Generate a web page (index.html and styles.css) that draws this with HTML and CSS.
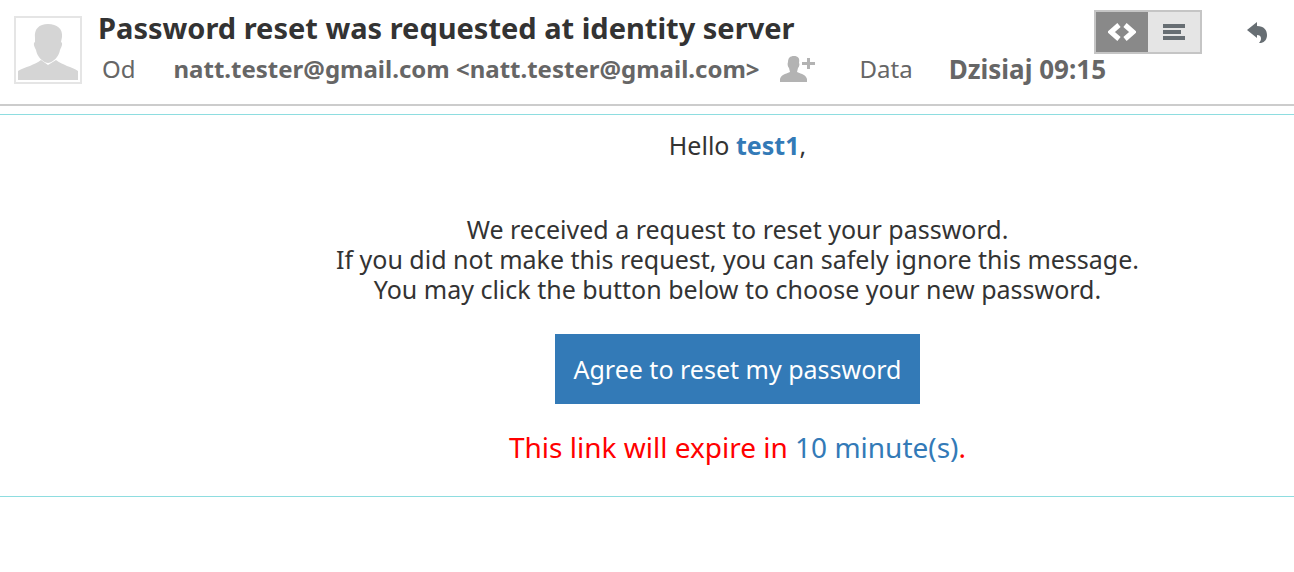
FILE: index.html
```html
<!DOCTYPE html>
<html lang="pl">

<head>
    <meta charset="UTF-8">
    <meta name="viewport" content="width=device-width, initial-scale=1.0">
    <title>Password reset was requested at identity server</title>
    <link rel="stylesheet" href="styles.css">
</head>

<body>

    <header class="message-header">
        <div class="avatar">
            <svg viewBox="0 0 64 64" aria-hidden="true">
                <path d="M19 20c-1-9 4-14 13-14s15 5 14 13l-1 5c2 1 1 4-1 8-1 6-6 12-12 13-6-1-11-7-12-13-2-4-3-7-1-8z" />
                <path d="M2 62v-9c7-4 17-6 23-11l7 5 8-5c6 5 16 7 22 11v9z" />
            </svg>
        </div>

        <div class="message-info">
            <h1>Password reset was requested at identity server</h1>
            <div class="details">
                <span class="label">Od</span>
                <strong class="sender">natt.tester@gmail.com &lt;natt.tester@gmail.com&gt;</strong>
                <button type="button" class="icon-button add-contact" aria-label="Dodaj kontakt">
                    <svg width="36" height="26" viewBox="0 0 36 26">
                        <path d="M8 6c0-4 2-6 6-6s6 2 5 7c1 1 0 4-1 5l-1 4c5 2 9 3 10 7v3H0v-3c1-4 5-5 10-7l-1-4c-1-1-2-4-1-6z" />
                        <path d="M27 2h3v4h5v3h-5v4h-3V9h-5V6h5z" />
                    </svg>
                </button>
                <span class="label">Data</span>
                <strong class="date">Dzisiaj 09:15</strong>
            </div>
        </div>

        <div class="actions">
            <div class="view-switch">
                <button type="button" class="active" aria-label="HTML">
                    <svg width="28" height="20" viewBox="0 0 28 20">
                        <path d="M11 3L3 10l8 7M17 3l8 7-8 7" fill="none" stroke="#fff" stroke-width="5" />
                    </svg>
                </button>
                <button type="button" aria-label="Tekst">
                    <svg width="22" height="16" viewBox="0 0 22 16">
                        <path d="M0 0h22v4H0zM0 6h18v4H0zM0 12h22v4H0z" fill="#676e73" />
                    </svg>
                </button>
            </div>
            <button type="button" class="icon-button reply" aria-label="Odpowiedz">
                <svg width="20" height="21" viewBox="0 0 20 21">
                    <path d="M0 8l10-8v4c7 0 10 4 10 9 0 4-2 7-6 8h-2c3-3 3-8-2-8v3z" fill="#676e73" />
                </svg>
            </button>
        </div>
    </header>

    <main class="message-body">
        <p class="greeting">Hello <strong>test1</strong>,</p>
        <p class="text">
            We received a request to reset your password.<br>
            If you did not make this request, you can safely ignore this message.<br>
            You may click the button below to choose your new password.
        </p>
        <a class="reset-link" href="#">Agree to reset my password</a>
        <p class="expire">This link will expire in <span>10 minute(s)</span>.</p>
    </main>

</body>

</html>
```
FILE: styles.css
```css
body {
    font-family: 'Noto Sans', 'Open Sans', sans-serif;
    font-size: 25px;
    line-height: 30px;
    background-color: #fff;
    color: #333;
    margin: 0;
}

p,
h1 {
    margin: 0;
}

button {
    border: none;
    padding: 0;
    cursor: pointer;
}

button svg {
    display: block;
}

.message-header {
    display: flex;
    align-items: flex-start;
    gap: 16px;
    min-height: 94px;
    padding: 10px 27px 0 14px;
    border-bottom: 2px solid #ccc;
}

.avatar {
    box-sizing: border-box;
    width: 68px;
    height: 68px;
    flex-shrink: 0;
    margin-top: 6px;
    border: 2px solid #e5e5e5;
}

.avatar svg {
    display: block;
    fill: #d5d5d5;
}

.message-info {
    flex: 1;
    min-width: 0;
    white-space: nowrap;
}

h1 {
    font-size: 29px;
    line-height: 36px;
}

.details {
    display: flex;
    align-items: center;
    padding: 7px 0 0 4px;
    font-size: 24px;
    line-height: 32px;
    color: #666;
}

.sender {
    margin-left: 38px;
}

.add-contact {
    margin: 0 44px 0 20px;
}

.date {
    margin-left: 36px;
    font-size: 26px;
}

.icon-button {
    background: none;
}

.add-contact svg {
    fill: #b3b3b3;
}

.actions {
    display: flex;
    flex-shrink: 0;
    align-items: center;
    gap: 45px;
}

.view-switch {
    display: flex;
    border: 2px solid #c5c5c5;
}

.view-switch button {
    display: flex;
    align-items: center;
    justify-content: center;
    width: 52px;
    height: 40px;
    background-color: #e5e5e5;
}

.view-switch .active {
    background-color: #898989;
}

/* message content */
.message-body {
    margin-top: 8px;
    padding: 15px 0 32px 181px;
    border-top: 1px solid #8edde0;
    border-bottom: 1px solid #8edde0;
    text-align: center;
}

.greeting strong,
.expire span {
    color: #337ab7;
}

.text {
    margin-top: 54px;
}

.reset-link {
    display: inline-block;
    margin-top: 30px;
    padding: 20px 18px;
    background-color: #337ab7;
    color: #fff;
    text-decoration: none;
}

.expire {
    margin-top: 26px;
    font-size: 28px;
    line-height: 34px;
    color: #f00;
}
```
